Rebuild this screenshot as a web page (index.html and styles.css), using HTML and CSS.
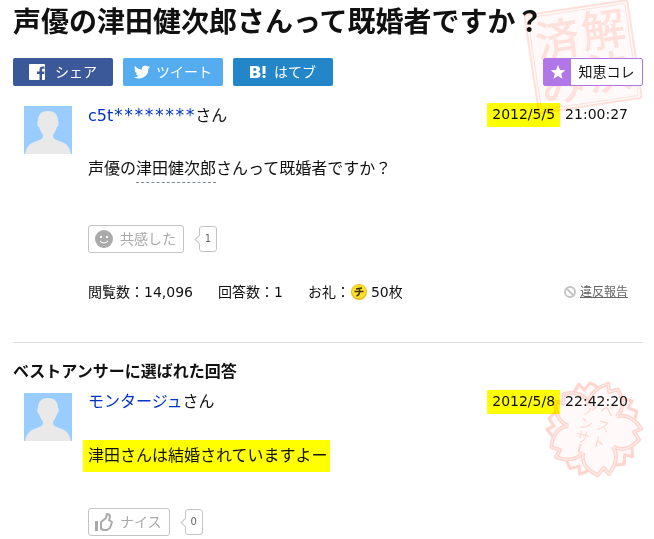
FILE: index.html
```html
<!DOCTYPE html>
<html lang="ja">
<head>
<meta charset="utf-8">
<title>声優の津田健次郎さんって既婚者ですか？</title>
<link rel="stylesheet" href="styles.css">
</head>
<body>
<main class="page">
  <article class="question">
    <svg class="stamp stamp-solved" viewBox="0 0 120 120" aria-hidden="true">
      <g transform="translate(61 56) rotate(-8.5)">
        <rect x="-53" y="-49" width="104" height="99" rx="3" fill="#fffaf9" stroke="#ffe0da" stroke-width="2"/>
        <rect x="-50" y="-46" width="98" height="93" rx="2" fill="none" stroke="#ffe0da" stroke-width="1"/>
        <g class="stamp-text stamp-text-large">
          <text x="23" y="-7">解</text><text x="23" y="36">決</text>
          <text x="-24" y="-4">済</text><text x="-25" y="41">み</text>
        </g>
      </g>
    </svg>
    <h1 class="title">声優の津田健次郎さんって既婚者ですか？</h1>
    <div class="share-row">
      <button class="share facebook" type="button">
        <svg width="16" height="16" viewBox="0 0 16 16" aria-hidden="true"><path fill="#fff" d="M1 0h14a1 1 0 0 1 1 1v14a1 1 0 0 1-1 1h-2V10h2.200l.3-2.500H13V6c0-.8.3-1.200 1.200-1.200h1.300V2.500C14.800 2.400 14.200 2.400 13.700 2.400 11.700 2.400 10.500 3.600 10.500 5.800v1.700H8V10h2.500v6H1a1 1 0 0 1-1-1V1a1 1 0 0 1 1-1z"/></svg>
        <span>シェア</span>
      </button>
      <button class="share twitter" type="button">
        <svg width="16" height="16" viewBox="0 0 24 24" aria-hidden="true"><path fill="#fff" d="M24 4.600a10 10 0 0 1-2.800.8 5 5 0 0 0 2.200-2.700 10 10 0 0 1-3.100 1.200 4.900 4.900 0 0 0-8.400 4.500A14 14 0 0 1 1.700 3.100a4.900 4.900 0 0 0 1.500 6.600 4.900 4.900 0 0 1-2.200-.6 4.900 4.900 0 0 0 3.900 4.900 5 5 0 0 1-2.200.1 4.900 4.900 0 0 0 4.600 3.400A9.900 9.900 0 0 1 0 19.500 14 14 0 0 0 21.500 7.100 10 10 0 0 0 24 4.600z"/></svg>
        <span>ツイート</span>
      </button>
      <button class="share hatena" type="button">
        <svg width="16" height="14" viewBox="0 0 16 14" aria-hidden="true"><path fill="#fff" fill-rule="evenodd" d="M0 1h5.500C8.500 1 10 2 10 4.200c0 1.400-.8 2.300-2.200 2.600 1.800.2 2.800 1.200 2.800 2.900C10.600 12 9 13 6 13H0zM3.400 3.300v2.500h1.100c1.300 0 1.900-.4 1.900-1.300s-.6-1.200-1.800-1.200zM3.400 8v2.700h1.300c1.400 0 2.100-.4 2.100-1.400C6.800 8.400 6.200 8 4.900 8zM12.500 1h3v8h-3z"/><circle cx="14" cy="11.500" r="1.600" fill="#fff"/></svg>
        <span>はてブ</span>
      </button>
      <button class="collect" type="button">
        <span class="collect-icon"><svg width="16" height="16" viewBox="0 0 16 16" aria-hidden="true"><path fill="#fff" d="M8 1l2 4.900 5.200.4-4 3.400 1.300 5.100L8 12l-4.500 2.800 1.300-5.100-4-3.400L6 5.900z"/></svg></span>
        <span class="collect-label">知恵コレ</span>
      </button>
    </div>
    <div class="post">
      <svg class="avatar" viewBox="0 0 48 48" aria-hidden="true"><path fill="#9cf" d="M0 0h48v48H0z"/><path fill="#e9e9e9" d="M1 48C2 43 4 39 8 37l7-3c3-1 4-2 4-5-2-3-3-5-4-8-2-1-2-5-1-6 0-7 4-10 10-10s10 3 10 10c1 1 1 5-1 6-1 3-2 5-4 8 0 3 1 4 4 5l7 3c4 2 6 6 7 11z"/></svg>
      <div class="post-body">
        <header class="post-head">
          <p class="author"><a href="#">c5t<span class="mask">********</span></a>さん</p>
          <p class="date"><mark>2012/5/5</mark> <span>21:00:27</span></p>
        </header>
        <p class="text">声優の<span class="keyword">津田健次郎</span>さんって既婚者ですか？</p>
        <div class="reaction">
          <button class="react" type="button">
            <svg width="18" height="18" viewBox="0 0 18 18" aria-hidden="true"><circle cx="9" cy="9" r="9" fill="#aaa"/><path fill="#fff" d="M5 6h2v2H5zM11 6h2v2h-2z"/><path d="M5 11q4 4 8 0" fill="none" stroke="#fff"/></svg>
            <span>共感した</span>
          </button>
          <span class="count">1</span>
        </div>
        <footer class="meta">
          <span>閲覧数：14,096</span>
          <span>回答数：1</span>
          <span class="reward">お礼：<svg width="16" height="16" viewBox="0 0 16 16" aria-hidden="true"><circle cx="8" cy="8" r="8" fill="#e8b820"/><circle cx="8" cy="7.500" r="7" fill="#ffdf26"/><path d="M11 4L5 5M3.500 7.500h9M8.500 5v3q0 3-3 4" fill="none" stroke="#443010" stroke-width="1.500"/></svg><span>50枚</span></span>
          <a class="report" href="#"><svg width="12" height="12" viewBox="0 0 12 12" aria-hidden="true"><g fill="none" stroke="#c4c4c4" stroke-width="2"><circle cx="6" cy="6" r="5"/><path d="M2.500 2.500l7 7"/></g></svg><span>違反報告</span></a>
        </footer>
      </div>
    </div>
  </article>
  <section class="answer">
    <h2 class="subtitle">ベストアンサーに選ばれた回答</h2>
    <div class="post">
      <svg class="stamp stamp-best" viewBox="0 0 100 100" aria-hidden="true">
        <defs>
          <path id="petal" d="M-15-21C-19-30-15-39-6-47L-2-40 5-46C15-39 19-30 15-21"/>
          <g id="flower"><use href="#petal"/><use href="#petal" transform="rotate(72)"/><use href="#petal" transform="rotate(144)"/><use href="#petal" transform="rotate(216)"/><use href="#petal" transform="rotate(288)"/></g>
        </defs>
        <g transform="translate(51 49)" stroke-linejoin="round">
          <use href="#flower" transform="rotate(-11)" fill="#fffaf9" stroke="#ffd5ce" stroke-width="3"/>
          <circle r="26" fill="#fffaf9"/>
          <g transform="rotate(25)">
            <use href="#flower" fill="#fffaf9" stroke="#ffd5ce" stroke-width="4"/>
            <use href="#flower" fill="none" stroke="#fff0ed" stroke-width="1"/>
          </g>
          <g class="stamp-text stamp-text-small" transform="rotate(15)">
            <text x="8" y="-16">ベ</text><text x="8" y="0">ス</text><text x="8" y="17">ト</text>
            <text x="-9" y="-12">ア</text><text x="-9" y="2">ン</text><text x="-9" y="16">サ</text>
            <path d="M-9 18v9" fill="none" stroke="#ffd5ce" stroke-width="2"/>
          </g>
        </g>
      </svg>
      <svg class="avatar" viewBox="0 0 48 48" aria-hidden="true"><path fill="#9cf" d="M0 0h48v48H0z"/><path fill="#e9e9e9" d="M1 48C2 43 4 39 8 37l7-3c3-1 4-2 4-5-2-3-3-5-4-8-2-1-2-5-1-6 0-7 4-10 10-10s10 3 10 10c1 1 1 5-1 6-1 3-2 5-4 8 0 3 1 4 4 5l7 3c4 2 6 6 7 11z"/></svg>
      <div class="post-body">
        <header class="post-head">
          <p class="author"><a href="#">モンタージュ</a>さん</p>
          <p class="date"><mark>2012/5/8</mark> <span>22:42:20</span></p>
        </header>
        <p class="text"><mark>津田さんは結婚されていますよー</mark></p>
        <div class="reaction">
          <button class="react nice" type="button">
            <svg width="18" height="18" viewBox="0 0 18 18" aria-hidden="true"><path d="M0 8h3v10H0z" fill="#aaa"/><path d="M6 9l5-4 1-4q3 0 3 3l-1 3 3 2-2 6-3 2H9l-3-1z" fill="none" stroke="#aaa" stroke-width="2" stroke-linejoin="round"/></svg>
            <span>ナイス</span>
          </button>
          <span class="count">0</span>
        </div>
      </div>
    </div>
  </section>
</main>
</body>
</html>
```
FILE: styles.css
```css
* { box-sizing: border-box; }
body {
  margin: 0;
  background: #fff;
  color: #111;
  font: 16px/24px "DejaVu Sans", "Noto Sans CJK JP", sans-serif;
}
h1, h2, p { margin: 0; }
a { color: #03c; text-decoration: none; }
button { font: inherit; cursor: pointer; padding: 0; }
svg { display: block; flex: none; }
mark { background: #ff0; color: inherit; }
.page { padding: 0 11px 0 13px; }
.question { position: relative; padding-bottom: 39px; border-bottom: 1px solid #ddd; }
.stamp { position: absolute; z-index: 1; overflow: visible; mix-blend-mode: multiply; pointer-events: none; }
.stamp-solved { width: 120px; height: 120px; top: 0; right: 0; }
.stamp-best { width: 100px; height: 100px; top: -13px; right: 0; }
.stamp-text { font-family: "Noto Sans CJK JP", sans-serif; fill: #ffd9d2; text-anchor: middle; }
.stamp-text-large { font-size: 44px; font-weight: 500; fill: #ffe0da; }
.stamp-text-small { font-size: 14px; }
.title { padding-top: 3px; font-size: 28px; line-height: 40px; }
.share-row { display: flex; gap: 10px; margin-top: 15px; height: 28px; font-size: 14px; line-height: 28px; }
.share {
  display: flex;
  align-items: center;
  justify-content: center;
  gap: 8px;
  width: 100px;
  border: 0;
  border-radius: 2px;
  color: #fff;
}
.facebook { background: #3b5998; gap: 10px; }
.twitter { background: #55acee; gap: 6px; }
.hatena { background: #2386c8; }
.collect {
  position: relative;
  z-index: 2;
  display: flex;
  width: 100px;
  margin-left: auto;
  border: 1px solid #b176e7;
  border-radius: 2px;
  background: #fff;
  color: #111;
  line-height: 26px;
}
.collect-icon { display: grid; place-items: center; width: 27px; height: 26px; background: #b176e7; }
.collect-label { flex: 1; }
.post { position: relative; display: flex; gap: 16px; padding: 0 15px 0 11px; }
.question .post { margin-top: 20px; }
.avatar { width: 48px; height: 48px; }
.post-body { flex: 1; min-width: 0; }
.post-head { display: flex; justify-content: space-between; height: 24px; margin-top: -3px; }
.date { display: flex; gap: 5px; font-size: 14px; line-height: 22px; }
.date mark { padding: 0 5px; }
.mask { font-family: "DejaVu Sans Mono", monospace; font-size: 17px; }
.text { margin-top: 26px; line-height: 32px; }
.text mark { display: inline-block; margin-left: -5px; padding: 0 2px 0 5px; }
.keyword { padding-bottom: 4px; border-bottom: 1px dashed #7b8794; }
.reaction { display: flex; align-items: center; gap: 15px; margin-top: 40px; }
.answer .reaction { margin-top: 36px; }
.react {
  display: flex;
  align-items: center;
  gap: 7px;
  height: 28px;
  padding: 0 7px 0 6px;
  border: 1px solid #c4c4c4;
  border-radius: 3px;
  background: #fff;
  color: #aaa;
  font-size: 14px;
}
.count {
  position: relative;
  width: 18px;
  height: 26px;
  border: 1px solid #c4c4c4;
  border-radius: 3px;
  color: #666;
  font-size: 10px;
  line-height: 24px;
  text-align: center;
}
.count::before {
  content: "";
  position: absolute;
  top: 9px;
  left: -4px;
  width: 6px;
  height: 6px;
  border: solid #c4c4c4;
  border-width: 0 0 1px 1px;
  background: #fff;
  transform: rotate(45deg);
}
.meta { display: flex; align-items: center; gap: 25px; margin-top: 28px; font-size: 14px; line-height: 22px; }
.reward { display: flex; align-items: center; }
.reward svg { margin: 0 4px 0 1px; }
.report { display: flex; align-items: center; gap: 4px; margin-left: auto; color: #666; font-size: 12px; }
.report span { text-decoration: underline; }
.subtitle { margin-top: 17px; font-size: 16px; line-height: 24px; }
.answer .post { margin-top: 9px; }
```
